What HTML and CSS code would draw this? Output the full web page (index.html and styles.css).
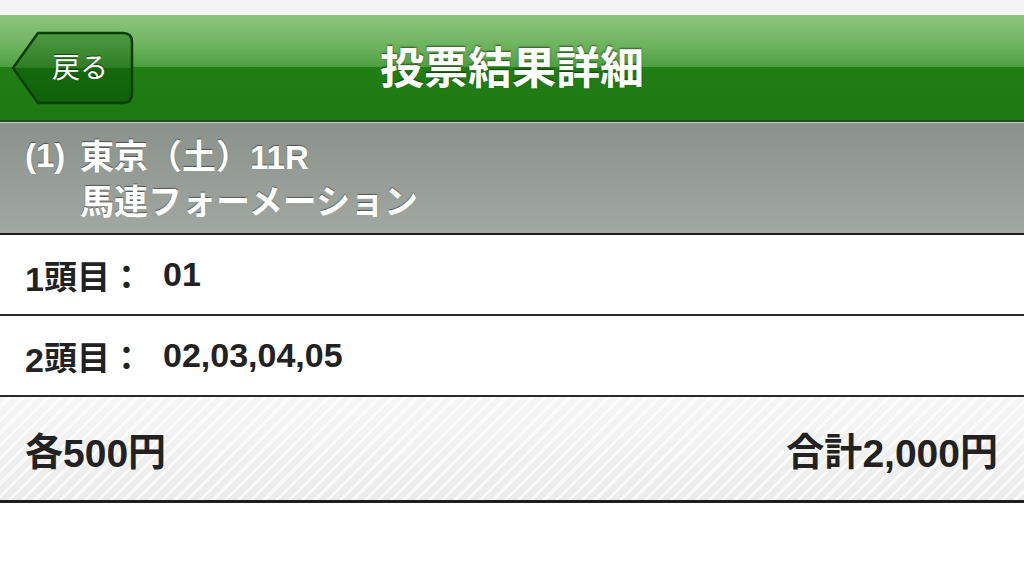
FILE: index.html
```html
<!DOCTYPE html>
<html lang="ja">
<head>
<meta charset="utf-8">
<title>投票結果詳細</title>
<link rel="stylesheet" href="styles.css">
</head>
<body>
<div class="topstrip"></div>
<header class="navbar">
  <a class="back" href="#">
    <svg class="back-shape" width="124" height="76" viewBox="0 0 124 76">
      <defs>
        <linearGradient id="bg" x1="0" y1="0" x2="0" y2="1">
          <stop offset="0" stop-color="#4f9a43"/>
          <stop offset="0.5" stop-color="#2e7d24"/>
          <stop offset="0.5" stop-color="#146a0c"/>
          <stop offset="1" stop-color="#0f600a"/>
        </linearGradient>
      </defs>
      <path d="M27 3 H112 Q121 3 121 12 V64 Q121 73 112 73 H27 L2 38 Z" fill="url(#bg)" stroke="#0b3d07" stroke-width="2.5" stroke-linejoin="round"/>
    </svg>
    <span class="back-label">戻る</span>
  </a>
  <h1 class="title">投票結果詳細</h1>
</header>
<section class="race">
  <span class="race-no">(1)</span>
  <div class="race-info">
    <div class="race-line">東京（土）<span class="num">11R</span></div>
    <div class="race-line">馬連フォーメーション</div>
  </div>
</section>
<div class="row">
  <span class="row-label"><span class="num">1</span>頭目：</span>
  <span class="num">01</span>
</div>
<div class="row">
  <span class="row-label"><span class="num">2</span>頭目：</span>
  <span class="num">02,03,04,05</span>
</div>
<div class="summary">
  <span>各<span class="num">500</span>円</span>
  <span>合計<span class="num">2,000</span>円</span>
</div>
</body>
</html>
```

FILE: styles.css
```css
* { box-sizing: border-box; }
html, body { margin: 0; padding: 0; }
body {
  width: 1024px;
  height: 582px;
  overflow: hidden;
  background: #ffffff;
  font-family: "Noto Sans CJK JP", sans-serif;
}
.num {
  font-family: "Liberation Sans", Arial, sans-serif;
  vertical-align: -2px;
}
.topstrip {
  height: 15px;
  background: #f3f3f3;
  border-bottom: 1px solid #ffffff;
}
.navbar {
  position: relative;
  height: 107px;
  background: linear-gradient(to bottom, #8cc57d 0%, #6cb35d 30%, #4f9f42 49%, #227f16 50%, #1d7812 100%);
  border-bottom: 2px solid #1d4a17;
  display: flex;
  align-items: center;
  justify-content: center;
}
.back {
  position: absolute;
  left: 11px;
  top: 15px;
  width: 124px;
  height: 76px;
  display: flex;
  align-items: center;
  justify-content: center;
  text-decoration: none;
}
.back-shape { position: absolute; left: 0; top: 0; }
.back-label {
  position: relative;
  color: #ffffff;
  font-size: 28px;
  line-height: 1;
  padding-left: 14px;
  margin-top: -4px;
  text-shadow: 0 -1px 1px rgba(0,0,0,0.5);
}
.title {
  margin: 0 0 6px 0;
  color: #ffffff;
  font-weight: 700;
  font-size: 44px;
  line-height: 1;
  text-shadow: 0 -1px 2px rgba(0,0,0,0.55);
}
.race {
  height: 113px;
  border-top: 1px solid #c8ccc8;
  background: linear-gradient(to bottom, #8b918b, #a1a8a1);
  border-bottom: 2px solid #1c1c1c;
  display: flex;
  padding: 9px 0 0 25px;
  color: #ffffff;
  font-weight: 700;
  font-size: 34px;
  line-height: 45px;
  text-shadow: 0 -1px 1px rgba(0,0,0,0.45);
}
.race-line {
  height: 45px;
  white-space: nowrap;
}
.race-no {
  width: 55px;
  height: 45px;
  font-family: "Liberation Sans", Arial, sans-serif;
  font-size: 33px;
  padding-top: 1px;
}
.race .num {
  font-size: 33px;
  vertical-align: 0;
}
.row {
  height: 81px;
  border-bottom: 2px solid #2a2a2a;
  display: flex;
  align-items: center;
  padding-left: 25px;
  color: #222222;
  font-weight: 700;
  font-size: 33px;
}
.row .num { font-size: 34px; }
.row-label { width: 138px; }
.summary {
  height: 106px;
  border-bottom: 3px solid #1e1e1e;
  background:
    repeating-linear-gradient(135deg, rgba(255,255,255,0) 0 6px, rgba(255,255,255,0.7) 6px 9px),
    linear-gradient(to bottom, #f6f6f6, #ebebeb);
  display: flex;
  align-items: center;
  justify-content: space-between;
  padding: 0 26px 0 25px;
  color: #222222;
  font-weight: 700;
  font-size: 38px;
}
.summary .num { font-size: 39px; }
```
